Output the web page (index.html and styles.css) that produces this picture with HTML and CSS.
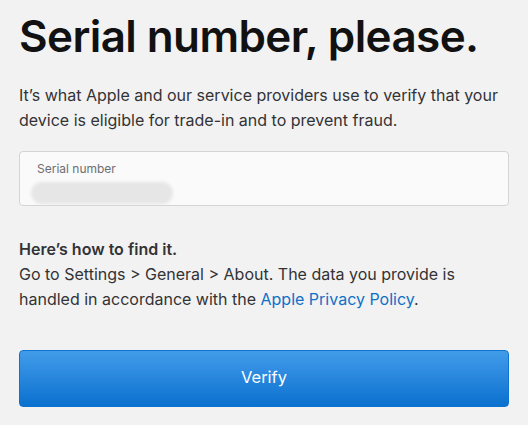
FILE: index.html
```html
<!DOCTYPE html>
<html>
<head>
<meta charset="utf-8">
<link rel="stylesheet" href="styles.css">
</head>
<body>
<main class="page">
  <h1 class="title">Serial number, please.</h1>
  <p class="intro">It’s what Apple and our service providers use to verify that your device is eligible for trade-in and to prevent fraud.</p>
  <div class="field">
    <span class="field-label">Serial number</span>
    <span class="field-value"></span>
  </div>
  <div class="help">
    <p class="help-title">Here’s how to find it.</p>
    <p class="help-text">Go to Settings &gt; General &gt; About. The data you provide is handled in accordance with the <a class="link" href="#">Apple Privacy Policy</a>.</p>
  </div>
  <button class="verify">Verify</button>
</main>
</body>
</html>
```
FILE: styles.css
```css
html, body {
  margin: 0;
  padding: 0;
  background: #f2f2f2;
}
body {
  font-family: Inter, "Liberation Sans", sans-serif;
  color: #333336;
}
.page {
  padding: 0 19px;
  display: flex;
  flex-direction: column;
}
.title {
  margin: 10px 0 0;
  font-size: 44px;
  line-height: 52px;
  font-weight: 600;
  letter-spacing: -0.6px;
  color: #111112;
}
.intro {
  margin: 21px 0 0;
  font-size: 16px;
  line-height: 25px;
}
.field {
  margin-top: 18px;
  height: 55px;
  box-sizing: border-box;
  border: 1px solid #d4d4d4;
  border-radius: 4px;
  background: #fafafa;
  padding: 9px 17px 0 17px;
  display: flex;
  flex-direction: column;
  align-items: flex-start;
}
.field-label {
  font-size: 12px;
  line-height: 16px;
  color: #6e6e73;
}
.field-value {
  margin: 5px 0 0 -6px;
  width: 142px;
  height: 22px;
  border-radius: 11px;
  background: #e6e6e6;
  filter: blur(1.5px);
}
.help {
  margin-top: 31px;
  font-size: 16px;
  line-height: 25px;
}
.help p {
  margin: 0;
}
.help-title {
  font-weight: 600;
}
.link {
  color: #0f70c8;
  text-decoration: none;
}
.verify {
  margin-top: 38px;
  height: 57px;
  border: 1px solid #0c73d1;
  border-radius: 4px;
  background: linear-gradient(#429ce9, #2a88de 45%, #0a71cf);
  color: #ffffff;
  font-family: Inter, "Liberation Sans", sans-serif;
  font-size: 16.5px;
  padding: 0 0 4px;
}
```
